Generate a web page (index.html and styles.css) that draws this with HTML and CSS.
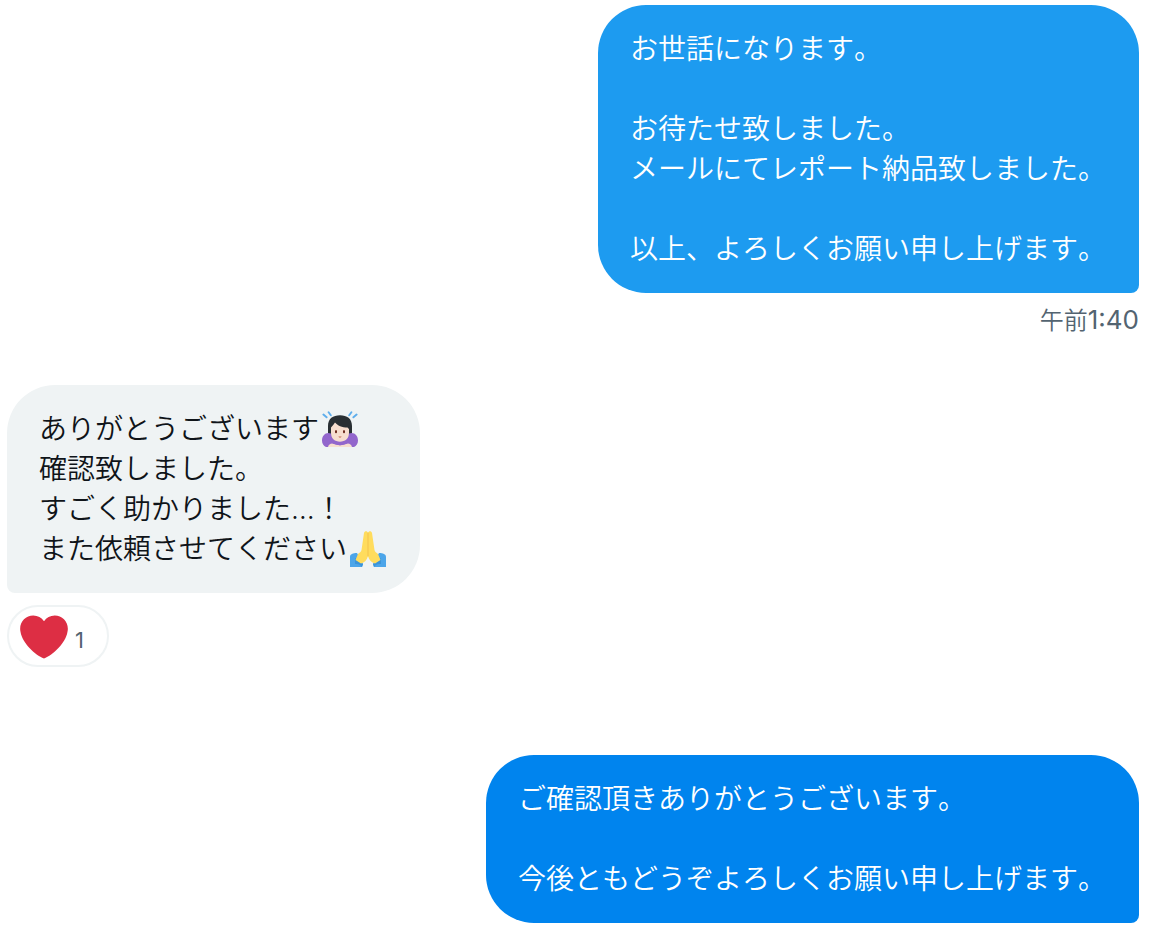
FILE: index.html
```html
<!DOCTYPE html>
<html lang="ja">
<head>
<meta charset="utf-8">
<meta name="viewport" content="width=device-width, initial-scale=1">
<title>メッセージ</title>
<link rel="stylesheet" href="styles.css">
</head>
<body>
<main class="thread">
  <article class="message message--sent">
    <div class="bubble bubble--blue">
      <p>お世話になります。</p>
      <p>お待たせ致しました。<br>メールにてレポート納品致しました。</p>
      <p>以上、よろしくお願い申し上げます。</p>
    </div>
    <time class="time" datetime="01:40">午前<span class="clock">1:40</span></time>
  </article>

  <article class="message message--received">
    <div class="bubble bubble--gray">
      <p>ありがとうございます<svg class="emoji" viewBox="0 0 36 36" role="img" aria-label="お辞儀する女性">
        <g stroke="#5dadec" stroke-width="1.9" stroke-linecap="round">
          <path d="M1.4 3.600 4.6 6.300M6.600 1.200 8.8 4.200M34.600 3.600 31.400 6.300M29.400 1.200 27.200 4.200"/>
        </g>
        <path fill="#292f33" d="M6 25V15C6 7.500 11 4.200 18 4.200S30 7.500 30 15V25H25V19H11V25z"/>
        <path fill="#9266cc" d="M9 22.500C4 20.500 0 24.500 0 29.500C0 32.800 1.600 34.800 4 36H32C34.400 34.800 36 32.800 36 29.500C36 24.500 32 20.500 27 22.500L24 29H12z"/>
        <path fill="#f7dece" d="M6 36C6.500 33.400 9 32 11.500 32.700L18 34.500L24.500 32.700C27 32 29.500 33.400 30 36z"/>
        <path fill="#9266cc" d="M9 26L18 31L27 26V31.500C24 33.500 21 34 18 34S12 33.500 9 31.500z"/>
        <path fill="#f7dece" d="M9 16.500C10.500 14.800 12 13.200 13 11.500C15.500 14.500 20 16.500 25.500 16.500L27 18V22C27 27.500 23 30.700 18 30.700S9 27.500 9 22z"/>
        <ellipse cx="14" cy="20.700" rx="1" ry="1.600" fill="#662113"/>
        <ellipse cx="22" cy="20.700" rx="1" ry="1.600" fill="#662113"/>
        <path fill="#c1694f" d="M16.500 25.500H19.500C19.300 27 16.700 27 16.500 25.500z"/>
      </svg><br>確認致しました。<br>すごく助かりました…！<br>また依頼させてください<svg class="emoji" viewBox="0 0 36 36" role="img" aria-label="合掌">
        <path fill="#4ca5e9" d="M0 36V26C0 23 3 22 7 22L13 33L12 36zM36 36V26C36 23 33 22 29 22L23 33L24 36z"/>
        <path fill="#3b94d9" d="M5 27L13 33L12 36C10.500 33.500 8 32.500 5 33zM31 27L23 33L24 36C25.500 33.500 28 32.500 31 33z"/>
        <path fill="#ffdc5d" d="M18 2C17.500 -.5 14.500 -.5 14 2L11.500 19C11.200 21 9.500 21.500 8 23L5.500 29L11 32.500C14.500 31.800 17 29 18 25C19 29 21.500 31.800 25 32.500L30.500 29L28 23C26.500 21.500 24.800 21 24.500 19L22 2C21.500 -.5 18.500 -.5 18 2z"/>
        <path fill="none" stroke="#f3c24c" stroke-width="1" stroke-linecap="round" d="M18 2V25"/>
      </svg></p>
    </div>
    <button class="reaction" type="button" aria-label="ハート 1件">
      <svg class="heart" viewBox="0 0 36 36" aria-hidden="true"><path fill="#dd2e44" d="M35.885 11.833c0-5.450-4.418-9.868-9.867-9.868-3.308 0-6.227 1.633-8.018 4.129-1.791-2.496-4.710-4.129-8.017-4.129-5.450 0-9.868 4.417-9.868 9.868 0 .772.098 1.520.266 2.241C1.751 22.587 11.216 31.568 18 34.034c6.783-2.466 16.249-11.447 17.617-19.959.170-.721.268-1.469.268-2.242z"/></svg>
      <span class="count">1</span>
    </button>
  </article>

  <article class="message message--sent">
    <div class="bubble bubble--deep">
      <p>ご確認頂きありがとうございます。</p>
      <p>今後ともどうぞよろしくお願い申し上げます。</p>
    </div>
  </article>
</main>
</body>
</html>
```
FILE: styles.css
```css
* {
  box-sizing: border-box;
}

body {
  margin: 0;
  background: #fff;
  color: #0f1419;
  font-family: Inter, "Noto Sans CJK JP", sans-serif;
  font-size: 28px;
  font-weight: 350;
  font-kerning: none;
  line-height: 40px;
}

p {
  margin: 0;
}

.thread {
  display: flex;
  flex-direction: column;
  padding: 5px 12px 10px 7px;
}

.message {
  display: flex;
  flex-direction: column;
}

.message--sent {
  align-items: flex-end;
}

.message--received {
  align-items: flex-start;
  gap: 12px;
  margin: 48px 0 88px;
}

.bubble {
  display: flex;
  flex-direction: column;
  gap: 40px;
  padding: 24px 32px;
  border-radius: 48px;
}

.bubble--blue,
.bubble--deep {
  padding-right: 33px;
  border-bottom-right-radius: 8px;
  color: #fff;
}

.bubble--blue {
  background: #1d9bf0;
}

.bubble--deep {
  background: #0084ee;
}

.bubble--gray {
  border-bottom-left-radius: 8px;
  background: #eff3f4;
}

.emoji {
  width: 36px;
  height: 36px;
  margin: 0 2px 0 3px;
  vertical-align: -8px;
}

.time {
  margin-top: 12px;
  color: #536471;
  font-size: 24px;
  line-height: 32px;
}

.clock {
  font-size: 26px;
  font-weight: 400;
  line-height: 24px;
}

.reaction {
  display: flex;
  align-items: center;
  gap: 7px;
  height: 62px;
  padding: 2px 23px 0 11px;
  border: 2px solid #eff3f4;
  border-radius: 31px;
  background: #fff;
  color: #536471;
  font: inherit;
  font-size: 22px;
  font-weight: 400;
  cursor: pointer;
}

.heart {
  width: 48px;
  height: 48px;
}

.count {
  padding-top: 6px;
  line-height: 24px;
}
```
